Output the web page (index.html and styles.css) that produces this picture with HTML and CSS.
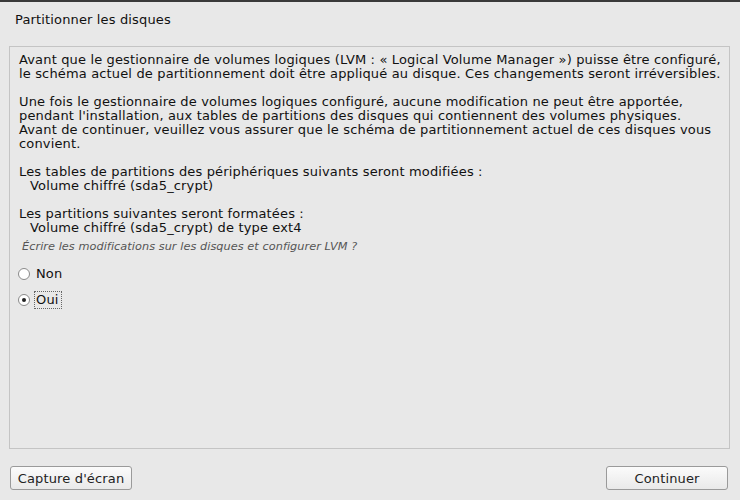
FILE: index.html
```html
<!DOCTYPE html>
<html lang="fr">
<head>
<meta charset="utf-8">
<link rel="stylesheet" href="styles.css">
</head>
<body>
<div class="topline"></div>
<div class="title">Partitionner les disques</div>
<div class="panel">
  <p>Avant que le gestionnaire de volumes logiques (LVM : « Logical Volume Manager ») puisse être configuré,<br>le schéma actuel de partitionnement doit être appliqué au disque. Ces changements seront irréversibles.</p>
  <p>Une fois le gestionnaire de volumes logiques configuré, aucune modification ne peut être apportée,<br>pendant l'installation, aux tables de partitions des disques qui contiennent des volumes physiques.<br>Avant de continuer, veuillez vous assurer que le schéma de partitionnement actuel de ces disques vous<br>convient.</p>
  <p>Les tables de partitions des périphériques suivants seront modifiées :<br><span class="ind">Volume chiffré (sda5_crypt)</span></p>
  <p class="tight">Les partitions suivantes seront formatées :<br><span class="ind">Volume chiffré (sda5_crypt) de type ext4</span></p>
  <div class="question">Écrire les modifications sur les disques et configurer LVM ?</div>
  <div class="options">
    <div class="opt"><span class="radio"></span><span class="label">Non</span></div>
    <div class="opt"><span class="radio checked"></span><span class="label focus">Oui</span></div>
  </div>
</div>
<div class="buttons">
  <button class="btn">Capture d'écran</button>
  <button class="btn">Continuer</button>
</div>
</body>
</html>
```
FILE: styles.css
```css
html, body {
  margin: 0;
  padding: 0;
  background: #e8e8e8;
  font-family: "DejaVu Sans", sans-serif;
  font-size: 13px;
  letter-spacing: 0.15px;
  color: #111;
  width: 740px;
  height: 500px;
  overflow: hidden;
}
.topline {
  height: 2px;
  background: #3a3a3a;
}
.title {
  padding: 10px 0 0 15px;
  height: 31px;
  box-sizing: border-box;
  line-height: 16px;
}
.panel {
  margin: 13px 10px 0 9px;
  height: 403px;
  box-sizing: border-box;
  border: 1px solid #c4c4c4;
  padding: 6px 0 0 9px;
  line-height: 14px;
}
.panel p {
  margin: 0 0 14px 0;
  white-space: nowrap;
}
.panel p.tight {
  margin-bottom: 5px;
}
.ind {
  padding-left: 11px;
}
.question {
  font-style: italic;
  font-size: 11.3px;
  letter-spacing: 0.05px;
  color: #555;
  padding-left: 3px;
  margin-bottom: 11px;
}
.options {
  display: flex;
  flex-direction: column;
  gap: 8px;
}
.opt {
  display: flex;
  align-items: center;
  gap: 4px;
  height: 18px;
}
.radio {
  width: 12px;
  height: 12px;
  margin-left: -1px;
  border: 1px solid #8a8a8a;
  border-radius: 50%;
  background: #fff;
  box-sizing: border-box;
  position: relative;
}
.radio.checked::after {
  content: "";
  position: absolute;
  left: 3px;
  top: 3px;
  width: 4px;
  height: 4px;
  border-radius: 50%;
  background: #222;
}
.label {
  padding: 1px 2px 1px 1px;
  border: 1px dotted transparent;
}
.label.focus {
  border-color: #666;
}
.buttons {
  display: flex;
  justify-content: space-between;
  padding: 17px 12px 0 10px;
}
.btn {
  width: 122px;
  height: 24px;
  font-family: "DejaVu Sans", sans-serif;
  font-size: 13px;
  letter-spacing: 0.15px;
  color: #222;
  border: 1px solid #9a9a9a;
  border-radius: 3px;
  background: linear-gradient(#fbfbfb, #e9e9e9);
  padding: 0;
}
```
